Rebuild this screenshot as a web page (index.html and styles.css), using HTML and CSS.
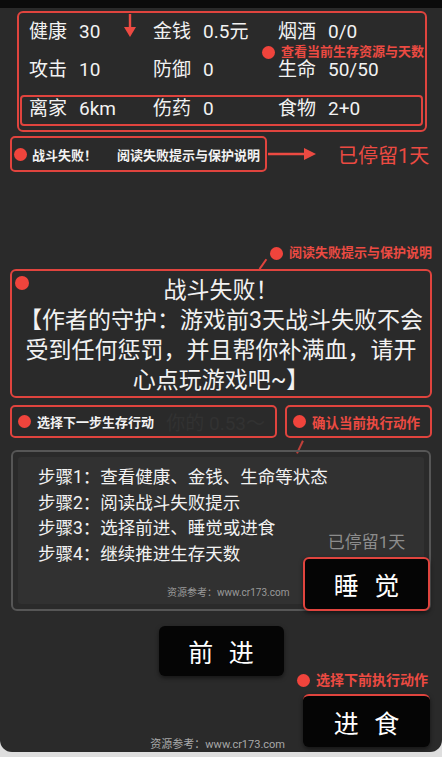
FILE: index.html
```html
<!DOCTYPE html>
<html lang="zh-CN">
<head>
    <meta charset="UTF-8">
    <meta name="viewport" content="width=device-width, initial-scale=1.0">
    <title>生存游戏 - 战斗失败</title>
    <link rel="stylesheet" href="styles.css">
</head>
<body>
    <div class="screen">
        <!-- Status panel -->
        <section class="stats">
            <div class="stat-row">
                <div class="stat"><span class="stat-name">健康</span>30</div>
                <div class="stat"><span class="stat-name">金钱</span>0.5元</div>
                <div class="stat"><span class="stat-name">烟酒</span>0/0</div>
            </div>
            <div class="stat-row stat-row-mid">
                <div class="stat"><span class="stat-name">攻击</span>10</div>
                <div class="stat"><span class="stat-name">防御</span>0</div>
                <div class="stat"><span class="stat-name">生命</span>50/50</div>
            </div>
            <div class="stat-row stat-row-boxed">
                <div class="stat"><span class="stat-name">离家</span>6km</div>
                <div class="stat"><span class="stat-name">伤药</span>0</div>
                <div class="stat"><span class="stat-name">食物</span>2+0</div>
            </div>
            <svg class="down-arrow" width="12" height="24" viewBox="0 0 12 24">
                <line x1="6" y1="0" x2="6" y2="15" stroke="#ec4a42" stroke-width="2.4"/>
                <polygon points="0,13 12,13 6,23" fill="#ec4a42"/>
            </svg>
            <div class="note note-stats"><i class="dot"></i>查看当前生存资源与天数</div>
        </section>

        <!-- Battle result line -->
        <div class="result-row">
            <div class="result-box">
                <i class="dot"></i>
                <span class="result-title">战斗失败！</span>
                <span>阅读失败提示与保护说明</span>
            </div>
            <svg class="right-arrow" width="48" height="12" viewBox="0 0 48 12">
                <line x1="0" y1="6" x2="38" y2="6" stroke="#ec4a42" stroke-width="2.4"/>
                <polygon points="36,0 48,6 36,12" fill="#ec4a42"/>
            </svg>
            <span class="stay-days">已停留1天</span>
        </div>

        <div class="note note-read"><i class="dot"></i>阅读失败提示与保护说明</div>

        <!-- Message -->
        <div class="message">
            <i class="dot dot-big"></i>
            战斗失败！<br>
            【作者的守护：游戏前3天战斗失败不会<br>
            受到任何惩罚，并且帮你补满血，请开<br>
            心点玩游戏吧~】
        </div>

        <!-- Action hints -->
        <div class="action-row">
            <div class="action-box action-next">
                <i class="dot"></i>选择下一步生存行动
                <span class="ghost-text">你的 0.53～</span>
            </div>
            <div class="action-box action-confirm">
                <i class="dot"></i>确认当前执行动作
            </div>
        </div>

        <!-- Steps -->
        <div class="steps-panel">
            <div class="steps-inner">
                <p class="step">步骤1：查看健康、金钱、生命等状态</p>
                <p class="step">步骤2：阅读战斗失败提示</p>
                <p class="step">步骤3：选择前进、睡觉或进食</p>
                <p class="step">步骤4：继续推进生存天数</p>
                <div class="source source-small">资源参考：www.cr173.com</div>
            </div>
            <div class="sleep-corner">
                <span class="stay-gray">已停留1天</span>
                <button class="btn btn-red">睡 觉</button>
            </div>
        </div>

        <button class="btn btn-forward">前 进</button>

        <div class="note note-eat"><i class="dot"></i>选择下前执行动作</div>

        <div class="eat-row">
            <div class="source">资源参考：www.cr173.com</div>
            <button class="btn btn-eat">进 食</button>
        </div>
    </div>
</body>
</html>
```

FILE: styles.css
```css
body {
    margin: 0;
    padding: 0;
    background: #dedede;
    font-family: Roboto, "Noto Sans CJK SC", "Noto Sans", sans-serif;
    color: #f2f2f2;
}

.screen {
    position: relative;
    box-sizing: border-box;
    height: 752px;
    border-top: 8px solid #0b0b0b;
    border-radius: 0 0 12px 12px;
    background: #2a2a2a;
    overflow: hidden;
}

.dot {
    display: inline-block;
    width: 13px;
    height: 13px;
    border-radius: 50%;
    background: #f0443c;
    flex-shrink: 0;
}

/* status panel */
.stats {
    position: relative;
    box-sizing: border-box;
    width: 410px;
    height: 121px;
    margin: 3px 0 0 17px;
    border: 2px solid #e0443e;
    border-radius: 6px;
}

.stat-row {
    display: grid;
    grid-template-columns: 124px 125px 1fr;
    height: 37px;
    padding-left: 10px;
    align-items: center;
    font-size: 19px;
    line-height: 20px;
}

.stat-row-mid {
    height: 39px;
}

.stat-name {
    margin-right: 12px;
}

.stat-row-boxed {
    box-sizing: border-box;
    height: 31px;
    margin: 6px 2px 0 1px;
    padding-left: 7px;
    padding-bottom: 3px;
    border: 2px solid #e0443e;
    border-radius: 4px;
}

.down-arrow {
    position: absolute;
    left: 105px;
    top: 1px;
}

.note {
    display: flex;
    align-items: center;
    gap: 6px;
    font-size: 13px;
    font-weight: 700;
    line-height: 16px;
    color: #ec4a42;
}

.note-stats {
    position: absolute;
    left: 243px;
    top: 31px;
}

/* result line */
.result-row {
    display: flex;
    align-items: center;
    margin: 4px 0 0 10px;
}

.result-box {
    box-sizing: border-box;
    display: flex;
    align-items: center;
    width: 257px;
    height: 36px;
    padding-left: 2px;
    border: 2px solid #e0443e;
    border-radius: 5px;
    font-size: 13px;
    font-weight: 700;
}

.result-box .dot {
    margin-right: 5px;
}

.result-title {
    margin-right: 20px;
}

.right-arrow {
    margin-left: 1px;
}

.stay-days {
    margin-left: 22px;
    font-size: 20px;
    color: #ec4a42;
}

.note-read {
    position: relative;
    justify-content: flex-end;
    margin: 73px 10px 0 0;
}

.note-read::after {
    content: "";
    position: absolute;
    left: 262px;
    top: 13px;
    width: 1.5px;
    height: 12px;
    background: #e0443e;
    transform: rotate(35deg);
}

/* message */
.message {
    position: relative;
    box-sizing: border-box;
    height: 129px;
    margin: 8px 10px 0;
    padding-top: 5px;
    border: 2px solid #e0443e;
    border-radius: 6px;
    text-align: center;
    font-size: 23px;
    line-height: 30px;
}

.dot-big {
    position: absolute;
    left: 3px;
    top: 5px;
    width: 14px;
    height: 14px;
}

/* action hints */
.action-row {
    display: flex;
    gap: 8px;
    height: 33px;
    margin: 7px 10px 0;
}

.action-box {
    position: relative;
    box-sizing: border-box;
    display: flex;
    align-items: center;
    gap: 6px;
    padding-left: 6px;
    border: 2px solid #e0443e;
    border-radius: 5px;
    font-size: 13px;
    font-weight: 700;
}

.action-next {
    width: 267px;
}

.action-confirm {
    flex: 1;
    color: #ec4a42;
    font-size: 13.5px;
}

.action-confirm::after {
    content: "";
    position: absolute;
    left: 12px;
    top: 33px;
    width: 1.5px;
    height: 14px;
    background: #c0403a;
    transform: rotate(25deg);
}

.ghost-text {
    margin-left: auto;
    padding-right: 10px;
    font-size: 19px;
    font-weight: 400;
    color: #323232;
}

/* steps */
.steps-panel {
    position: relative;
    box-sizing: border-box;
    width: 420px;
    height: 161px;
    margin: 12px 0 0 11px;
    padding: 5px;
    border: 2px solid #565656;
    border-radius: 6px;
}

.steps-inner {
    box-sizing: border-box;
    height: 100%;
    padding: 8px 0 0 20px;
    background: #313131;
    border-radius: 3px;
}

.step {
    margin: 0;
    font-size: 17.5px;
    line-height: 25.5px;
}

.source {
    font-size: 11px;
    line-height: 14px;
    color: #a8a8a8;
}

.source-small {
    margin: 19px 0 0 129px;
    font-size: 10px;
    color: #9a9a9a;
}

.sleep-corner {
    position: absolute;
    right: -1px;
    bottom: -2px;
    display: flex;
    flex-direction: column;
    align-items: center;
    gap: 5px;
}

.stay-gray {
    font-size: 17px;
    line-height: 20px;
    color: #8c8c8c;
}

.btn {
    box-sizing: border-box;
    border: none;
    border-radius: 6px;
    background: #050505;
    color: #fff;
    font-family: "Noto Sans CJK SC", sans-serif;
    font-size: 25px;
    letter-spacing: 5px;
    text-indent: 5px;
    box-shadow: 0 2px 4px rgba(0, 0, 0, 0.5);
}

.btn-red {
    width: 127px;
    height: 54px;
    border: 2px solid #e0443e;
}

.btn-forward {
    display: block;
    width: 125px;
    height: 50px;
    margin: 15px auto 0;
}

.note-eat {
    justify-content: flex-end;
    margin: -4px 14px 0 0;
    font-size: 14px;
}

.eat-row {
    display: flex;
    justify-content: flex-end;
    align-items: flex-end;
    margin-top: 6px;
    padding-right: 12px;
}

.eat-row .source {
    margin: 0 18px -5px 0;
}

.btn-eat {
    width: 127px;
    height: 53px;
    border-top: 2px solid #e0443e;
}
```
